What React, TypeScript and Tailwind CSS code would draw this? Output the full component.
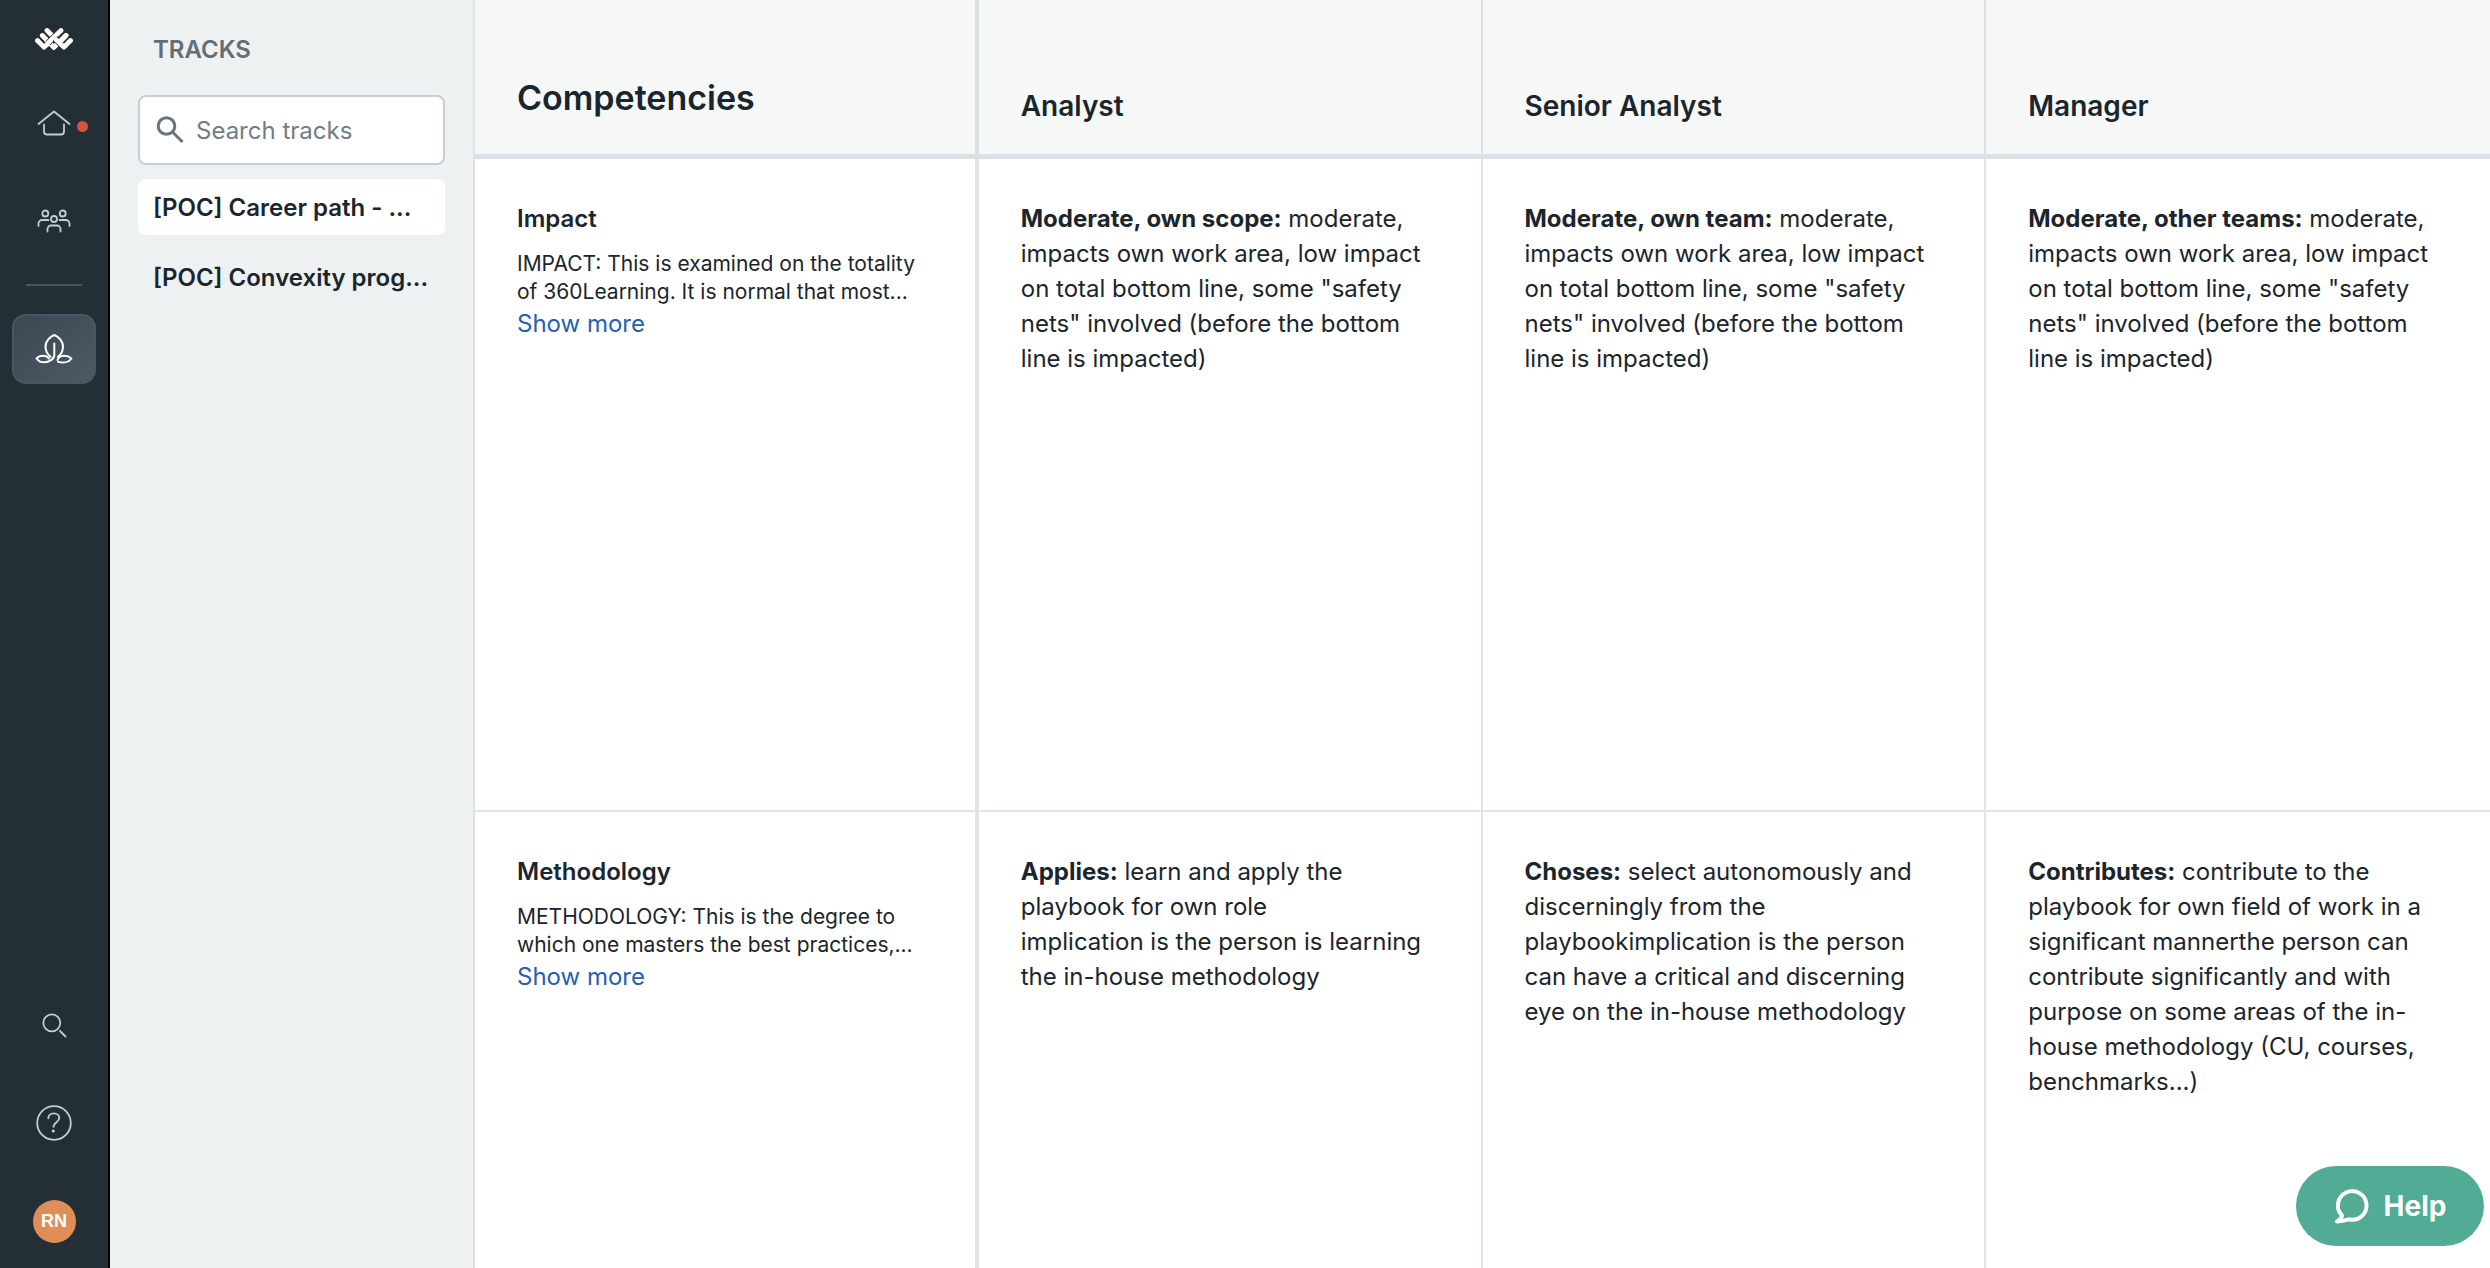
import { useState } from "react";
import type { ReactNode } from "react";

const tracks = ["[POC] Career path - ...", "[POC] Convexity prog..."];

const levels = ["Analyst", "Senior Analyst", "Manager"];

const competencies = [
  {
    name: "Impact",
    summary: ["IMPACT: This is examined on the totality", "of 360Learning. It is normal that most..."],
    cells: [
      {
        label: "Moderate, own scope:",
        text: 'moderate, impacts own work area, low impact on total bottom line, some "safety nets" involved (before the bottom line is impacted)',
      },
      {
        label: "Moderate, own team:",
        text: 'moderate, impacts own work area, low impact on total bottom line, some "safety nets" involved (before the bottom line is impacted)',
      },
      {
        label: "Moderate, other teams:",
        text: 'moderate, impacts own work area, low impact on total bottom line, some "safety nets" involved (before the bottom line is impacted)',
      },
    ],
  },
  {
    name: "Methodology",
    summary: ["METHODOLOGY: This is the degree to", "which one masters the best practices,..."],
    cells: [
      {
        label: "Applies:",
        text: "learn and apply the playbook for own role\nimplication is the person is learning the in-house methodology",
      },
      {
        label: "Choses:",
        text: "select autonomously and discerningly from the playbookimplication is the person can have a critical and discerning eye on the in-house methodology",
      },
      {
        label: "Contributes:",
        text: "contribute to the playbook for own field of work in a significant mannerthe person can contribute significantly and with purpose on some areas of the in-house methodology (CU, courses, benchmarks...)",
      },
    ],
  },
];

// woven strands: every strand that passes over another gets a dark edge first
function Logo() {
  return (
    <svg width="38" height="22" viewBox="0 0 38 22" fill="none" stroke="#fff" strokeWidth="4.8" strokeLinecap="round" strokeLinejoin="round">
      <path d="M2.500 12.500 9 19.200 12 16.500M7.300 7.500l11.500 11.700M12 2.500l7 7" />
      <path d="M31 7.500 19 19.200" />
      <path d="M26 2.500 13 15" stroke="#232e35" strokeWidth="6.500" strokeLinecap="butt" />
      <path d="M26 2.500 13.500 14.500" />
      <path d="m20 10.500 9 8.700 6.500-6.700" stroke="#232e35" strokeWidth="6.500" strokeLinecap="butt" />
      <path d="m21 11.500 8 7.700 6.500-6.700M31 7.500l-4.500 4.500" />
    </svg>
  );
}

function HomeIcon() {
  return (
    <svg width="34" height="26" viewBox="0 0 34 26" fill="none" stroke="#c3cdd5" strokeWidth="1.8" strokeLinecap="round" strokeLinejoin="round">
      <path d="M1.500 14 17 1.500 32.500 14" />
      <path d="M7 14.500V21.500a3 3 0 0 0 3 3h14a3 3 0 0 0 3-3V14.500" />
    </svg>
  );
}

function PeopleIcon() {
  return (
    <svg width="34" height="24" viewBox="0 0 34 24" fill="none" stroke="#c3cdd5" strokeWidth="1.8" strokeLinecap="round">
      <circle cx="8.300" cy="4.500" r="3" />
      <circle cx="25.700" cy="4.500" r="3" />
      <circle cx="17" cy="10" r="3" />
      <path d="M1.500 17v-2.500a3.500 3.500 0 0 1 3.500-3.500h6.500M32.500 17v-2.500a3.500 3.500 0 0 0-3.500-3.500h-6.500" />
      <path d="M10.500 22.500V20a3.500 3.500 0 0 1 3.500-3.500h6a3.500 3.500 0 0 1 3.500 3.500v2.500" />
    </svg>
  );
}

function LeafIcon() {
  return (
    <svg width="38" height="30" viewBox="0 0 38 30" fill="none" stroke="#fff" strokeWidth="2" strokeLinecap="round" strokeLinejoin="round">
      <path d="M19.300 9.500V21c0 4-5 7.300-10.500 7.300-3 0-5.500-1.300-7.300-3.800 3.500-3.700 9.500-3.700 12.500 0" />
      <path d="M15.500 22.800C12 20 10.500 17 10.500 12.500 10.500 7.500 14.500 3 19.300 1c4.800 2 8.700 6.500 8.700 11.500 0 4.500-1.500 7.500-5 10.300" />
      <path d="M22.500 25.800c2-4.800 9.500-5.300 14-1.300-2.500 3.800-8 4.800-13.500 3.200" />
    </svg>
  );
}

function SearchIcon() {
  return (
    <svg width="25" height="25" viewBox="0 0 25 25" fill="none" stroke="#c3cdd5" strokeWidth="1.8" strokeLinecap="round">
      <circle cx="9.800" cy="9.800" r="8.500" />
      <path d="m18 18 5.500 5.500" />
    </svg>
  );
}

function HelpIcon() {
  return (
    <svg width="36" height="36" viewBox="0 0 36 36" fill="none" stroke="#c3cdd5" strokeWidth="1.8" strokeLinecap="round">
      <circle cx="18" cy="18" r="16.800" />
      <path d="M12.300 13.300c0-3 2.400-5 5.500-5s5.500 2 5.500 4.800c0 4.200-5.800 4.200-5.800 8.700" />
      <circle cx="17.300" cy="26" r="1.600" fill="#c3cdd5" stroke="none" />
    </svg>
  );
}

function NavButton({ label, active, children }: { label: string; active?: boolean; children: ReactNode }) {
  return (
    <button
      aria-label={label}
      className={
        active
          ? "relative flex h-[70px] w-[84px] items-center justify-center rounded-[14px] border-2 border-[#4a5761] bg-linear-to-br from-[#3b4853] to-[#4d5965]"
          : "relative flex h-[70px] w-[84px] items-center justify-center rounded-[14px]"
      }
    >
      {children}
    </button>
  );
}

export default function App() {
  const [query, setQuery] = useState("");
  const [selected, setSelected] = useState(0);

  return (
    <div className="flex h-screen overflow-hidden bg-white font-['Inter',sans-serif] text-[#1b252d]">
      <nav className="flex w-[110px] shrink-0 flex-col items-center border-r-2 border-black bg-[#232e35] pt-7 pb-3">
        <Logo />
        <div className="mt-[38px] flex flex-col items-center gap-7">
          <NavButton label="Home">
            <HomeIcon />
            <span className="absolute top-[33px] right-2 size-[11px] rounded-full bg-[#d9513a]" />
          </NavButton>
          <NavButton label="People">
            <PeopleIcon />
          </NavButton>
          <div className="h-[2px] w-14 bg-[#4a565e]" />
          <NavButton label="Career" active>
            <LeafIcon />
          </NavButton>
        </div>
        <div className="mt-auto flex flex-col items-center gap-7">
          <NavButton label="Search">
            <SearchIcon />
          </NavButton>
          <NavButton label="Support">
            <HelpIcon />
          </NavButton>
          <NavButton label="Profile">
            <span className="flex size-[43px] items-center justify-center rounded-full bg-[#e08e58] font-['Liberation_Sans',sans-serif] text-[18px] font-bold text-white">
              RN
            </span>
          </NavButton>
        </div>
      </nav>

      <aside className="w-[365px] shrink-0 border-r-2 border-[#dde2e5] bg-[#edf1f2] px-7 pt-8">
        <h2 className="px-[15px] text-[24px] leading-[35px] font-semibold text-[#616e78]">TRACKS</h2>
        <label className="mt-7 flex h-[70px] items-center rounded-lg border-2 border-[#c8cfd4] bg-white pl-4">
          <svg width="28" height="28" viewBox="0 0 28 28" fill="none" stroke="#67747d" strokeWidth="3" className="shrink-0">
            <circle cx="10.500" cy="10" r="8.300" />
            <path d="m16.500 16 10 10" />
          </svg>
          <input
            type="text"
            aria-label="Search tracks"
            placeholder="Search tracks"
            value={query}
            onChange={(e) => setQuery(e.target.value)}
            className="ml-3 w-full min-w-0 text-[24px] leading-[35px] outline-none placeholder:text-[#707d87]"
          />
        </label>
        <div className="mt-[14px] flex flex-col gap-[14px]">
          {tracks.map((track, i) => (
            <button
              key={track}
              onClick={() => setSelected(i)}
              className={
                i === selected
                  ? "h-14 rounded-lg bg-white px-[15px] text-left text-[24px] leading-[35px] font-semibold whitespace-nowrap"
                  : "h-14 rounded-lg px-[15px] text-left text-[24px] leading-[35px] font-semibold whitespace-nowrap"
              }
            >
              {track}
            </button>
          ))}
        </div>
      </aside>

      <main className="min-w-0 flex-1 overflow-auto [scrollbar-width:none]">
        <table className="w-full table-fixed border-separate border-spacing-0 text-left">
          <thead>
            <tr className="h-[159px] bg-[#f5f8f7] align-bottom">
              <th className="border-r-4 border-b-[5px] border-[#dbe0e4] px-[42px] pb-[34px] text-[34px] leading-[44px] font-semibold">
                Competencies
              </th>
              {levels.map((level) => (
                <th
                  key={level}
                  className="border-r-2 border-b-[5px] border-[#dbe0e4] px-[42px] pb-[30px] text-[28px] leading-[35px] font-semibold last:border-r-0"
                >
                  {level}
                </th>
              ))}
            </tr>
          </thead>
          <tbody>
            {competencies.map((row) => (
              <tr key={row.name} className="h-[653px] align-top">
                <th className="border-r-4 border-b-2 border-[#dfe4e6] px-[42px] pt-[42px] font-normal">
                  <h3 className="text-[24px] leading-[35px] font-semibold">{row.name}</h3>
                  <p className="mt-[14px] text-[21px] leading-7 whitespace-nowrap">
                    {row.summary[0]}
                    <br />
                    {row.summary[1]}
                  </p>
                  <a href="#" className="text-[24px] leading-[35px] text-[#2460b4]">
                    Show more
                  </a>
                </th>
                {row.cells.map((cell) => (
                  <td
                    key={cell.label}
                    className="border-r-2 border-b-2 border-[#dfe4e6] px-[42px] pt-[42px] text-[24px] leading-[35px] whitespace-pre-line last:border-r-0"
                  >
                    <strong className="font-bold">{cell.label}</strong> {cell.text}
                  </td>
                ))}
              </tr>
            ))}
          </tbody>
        </table>
      </main>

      <button className="fixed right-[6px] bottom-[22px] flex h-20 w-[188px] items-center justify-center gap-[14px] rounded-full bg-[#51ab95] text-[28px] font-bold text-white">
        <svg width="36" height="36" viewBox="0 0 36 36" fill="none" stroke="currentColor" strokeWidth="4" strokeLinecap="round" strokeLinejoin="round">
          <path d="M8 27.500A14.300 14.300 0 1 1 14.500 31.300C11 32.500 7.500 33.300 3 33.500 6 32 7.500 30 8 27.500Z" />
        </svg>
        Help
      </button>
    </div>
  );
}
